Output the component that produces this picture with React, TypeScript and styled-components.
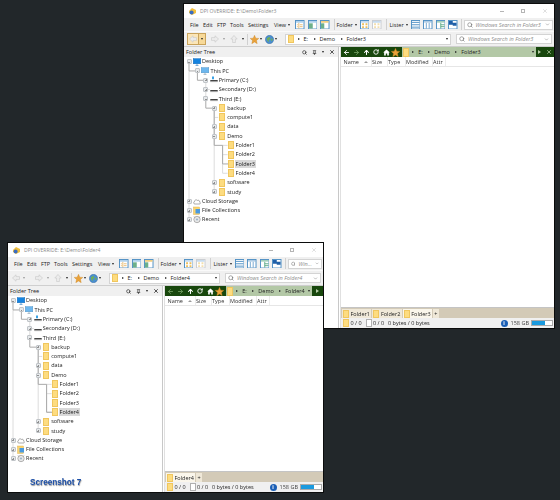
import React from "react";
import styled, { createGlobalStyle } from "styled-components";
import { ArrowLeft, ArrowRight, ArrowUp, RotateCw, Search, X, ChevronDown, Pin } from "lucide-react";

const GlobalStyle = createGlobalStyle`
  html, body {
    margin: 0;
    padding: 0;
    height: 100%;
    background: #22272a;
    overflow: hidden;
  }
  * { box-sizing: border-box; }
`;

const ROW_H = 9.3;

const Desktop = styled.div`
  position: relative;
  width: 560px;
  height: 500px;
  background: #22272a;
  font-family: "Open Sans", "Noto Sans", sans-serif;
  font-size: 5.5px;
  color: #222;
`;

const Win = styled.div<{ $x: number; $y: number; $w: number; $h: number }>`
  position: absolute;
  left: ${(p) => p.$x}px;
  top: ${(p) => p.$y}px;
  width: ${(p) => p.$w}px;
  height: ${(p) => p.$h}px;
  background: #fff;
  outline: 1px solid #0b0c0c;
  display: flex;
  flex-direction: column;
  filter: blur(0.3px);
`;

const TitleBar = styled.div`
  height: 14px;
  flex: none;
  display: flex;
  align-items: center;
  padding-left: 4px;
  gap: 3px;
  color: #8a8a8a;
  background: #fff;
`;

const TitleText = styled.span`
  font-size: 5.1px;
`;

const Controls = styled.div`
  margin-left: auto;
  display: flex;
  align-items: center;
  gap: 17px;
  padding-right: 6px;
  color: #aaa;
`;

const MinLine = styled.span`
  width: 4px;
  height: 1px;
  background: #b5b5b5;
`;

const MaxBox = styled.span`
  width: 4px;
  height: 4px;
  border: 1px solid #b5b5b5;
`;

const MenuRow = styled.div`
  height: 14px;
  flex: none;
  display: flex;
  align-items: center;
  padding-left: 6px;
  padding-right: 1px;
  background: #f0f0f0;
  border-bottom: 1px solid #fafafa;
`;

const NavRow = styled.div`
  height: 15px;
  flex: none;
  display: flex;
  align-items: center;
  padding-left: 3px;
  padding-right: 2px;
  background: #f0f0f0;
  border-bottom: 1px solid #cfcfcf;
`;

const MenuItem = styled.span<{ $w: number }>`
  width: ${(p) => p.$w}px;
  flex: none;
  color: #222;
  white-space: nowrap;
  display: flex;
  align-items: center;
`;

const Caret = styled.span<{ $light?: boolean; $ml?: number }>`
  display: inline-block;
  flex: none;
  margin-left: ${(p) => p.$ml ?? 2}px;
  width: 0;
  height: 0;
  border-left: 1.8px solid transparent;
  border-right: 1.8px solid transparent;
  border-top: 2.2px solid ${(p) => (p.$light ? "#999" : "#222")};
`;

const Sep = styled.span<{ $ml: number; $mr: number }>`
  flex: none;
  width: 1px;
  height: 11px;
  background: #d0d0d0;
  margin-left: ${(p) => p.$ml}px;
  margin-right: ${(p) => p.$mr}px;
`;

const ToolIcon = styled.span<{ $ml?: number }>`
  flex: none;
  display: flex;
  margin-left: ${(p) => p.$ml ?? 0}px;
`;

const SearchBox = styled.div<{ $w?: number; $ml?: number }>`
  flex: ${(p) => (p.$w ? "none" : 1)};
  width: ${(p) => (p.$w ? `${p.$w}px` : "auto")};
  margin-left: ${(p) => p.$ml ?? 0}px;
  min-width: 0;
  height: 10px;
  background: #fff;
  border: 1px solid #d4d4d4;
  display: flex;
  align-items: center;
  padding: 0 2px;
  gap: 3px;
  color: #8c8c8c;
  font-style: italic;
  white-space: nowrap;
`;

const Fill = styled.span`
  flex: 1;
`;

const BackSplit = styled.div`
  flex: none;
  width: 19px;
  height: 12px;
  display: flex;
  border: 1px solid #c9a35b;
  background: #fbe6b8;
`;

const BackPart = styled.span`
  flex: 1;
  display: flex;
  align-items: center;
  justify-content: center;
  color: #fff;
`;

const CaretPart = styled.span`
  width: 7px;
  display: flex;
  align-items: center;
  justify-content: center;
  border-left: 1px solid #c9a35b;
  background: #f7d998;
`;

const AddressBox = styled.div<{ $ml: number }>`
  flex: 1;
  min-width: 0;
  margin-left: ${(p) => p.$ml}px;
  height: 11px;
  background: #fff;
  border: 1px solid #d4d4d4;
  display: flex;
  align-items: center;
  padding: 0 2px;
  color: #222;
  white-space: nowrap;
`;

const Folder = styled.span<{ $w?: number; $h?: number }>`
  display: inline-block;
  flex: none;
  width: ${(p) => p.$w ?? 6}px;
  height: ${(p) => p.$h ?? 8}px;
  background: #fddc80;
  border: 0.5px solid #f0c65e;
`;

const Crumb = styled.span`
  display: inline-flex;
  align-items: center;
  margin-left: 5.5px;
  ${Folder} + & {
    margin-left: 3.5px;
  }
  &::before {
    content: "";
    width: 0;
    height: 0;
    margin-right: 4px;
    border-top: 1.6px solid transparent;
    border-bottom: 1.6px solid transparent;
    border-left: 2.2px solid #222;
  }
`;

const Panes = styled.div`
  flex: 1;
  min-height: 0;
  display: flex;
`;

const TreePane = styled.div`
  width: 155px;
  flex: none;
  display: flex;
  flex-direction: column;
  border-right: 1px solid #c8c8c8;
`;

const PaneHead = styled.div`
  height: 10px;
  flex: none;
  display: flex;
  align-items: center;
  padding: 0 3px 0 2px;
  background: #f0f0f0;
  color: #222;
`;

const HeadIcons = styled.div`
  margin-left: auto;
  display: flex;
  align-items: center;
  gap: 5px;
  color: #222;
`;

const TreeBody = styled.div`
  position: relative;
  flex: 1;
  min-height: 0;
`;

const TreeLines = styled.svg`
  position: absolute;
  left: 0;
  top: 0;
`;

const TreeRow = styled.div<{ $depth: number }>`
  position: relative;
  height: ${ROW_H}px;
  display: flex;
  align-items: center;
  padding-left: ${(p) => 2.5 + p.$depth * 8.4}px;
`;

const Expander = styled.span<{ $state?: "plus" | "minus" }>`
  flex: none;
  position: relative;
  width: 5px;
  height: 5px;
  background: ${(p) => (p.$state ? "#e6e9eb" : "transparent")};
  border: ${(p) => (p.$state ? "0.5px solid #c0c4c8" : "none")};
  border-radius: 1px;
  margin-right: 1.5px;
  &::after {
    content: ${(p) => (p.$state ? '""' : "none")};
    position: absolute;
    left: 0.7px;
    right: 0.7px;
    top: 1.7px;
    height: 0.7px;
    background: #8f8f8f;
  }
  &::before {
    content: ${(p) => (p.$state === "plus" ? '""' : "none")};
    position: absolute;
    top: 0.7px;
    bottom: 0.7px;
    left: 1.7px;
    width: 0.7px;
    background: #8f8f8f;
  }
`;

const IconSlot = styled.span`
  flex: none;
  width: 8px;
  height: 9px;
  display: flex;
  align-items: center;
  justify-content: center;
`;

const Label = styled.span<{ $sel?: boolean }>`
  margin-left: ${(p) => (p.$sel ? 0 : 1)}px;
  padding: 0 ${(p) => (p.$sel ? 1 : 0)}px;
  white-space: nowrap;
  color: #222;
  background: ${(p) => (p.$sel ? "#d9d9d9" : "transparent")};
  line-height: 8.5px;
`;

const ListPane = styled.div`
  flex: 1;
  min-width: 0;
  display: flex;
  flex-direction: column;
  margin-left: 1px;
  border-left: 1px solid #e0e0e0;
`;

const GreenBar = styled.div`
  height: 10px;
  flex: none;
  display: flex;
  align-items: center;
  background: #18470d;
  padding-left: 1px;
`;

const GreenBtn = styled.span<{ $dim?: boolean }>`
  flex: none;
  width: 9.8px;
  display: flex;
  justify-content: center;
  color: ${(p) => (p.$dim ? "#6f9a5e" : "#fff")};
`;

const GreenAddress = styled.div`
  flex: 1;
  min-width: 0;
  margin-left: 1px;
  height: 10px;
  background: #b3c8a6;
  display: flex;
  align-items: center;
  padding: 0 2px 0 1px;
  color: #222;
  white-space: nowrap;
`;

const EndBtns = styled.div<{ $w: number }>`
  flex: none;
  width: ${(p) => p.$w}px;
  display: flex;
  align-items: center;
  justify-content: space-around;
  color: #b5cca6;
`;

const PlayMark = styled.span`
  width: 0;
  height: 0;
  border-top: 2px solid transparent;
  border-bottom: 2px solid transparent;
  border-left: 3px solid #b5cca6;
`;

const ColRow = styled.div`
  height: 10px;
  flex: none;
  display: flex;
  align-items: center;
  padding-left: 2.5px;
  color: #333;
  border-bottom: 1px solid #e6e6e6;
`;

const Col = styled.span<{ $w: number }>`
  width: ${(p) => p.$w}px;
  flex: none;
  height: 100%;
  display: flex;
  align-items: center;
  white-space: nowrap;
  border-right: 1px solid #ececec;
`;

const SortMark = styled.span`
  margin-left: 5px;
  width: 0;
  height: 0;
  border-left: 2px solid transparent;
  border-right: 2px solid transparent;
  border-bottom: 2px solid #999;
`;

const ListBody = styled.div`
  flex: 1;
  background: #fff;
`;

const TabBar = styled.div`
  height: 11px;
  flex: none;
  display: flex;
  align-items: stretch;
  background: #d3cab7;
  padding: 1px 0 0 1px;
  border-top: 1px solid #c4c4c4;
`;

const Tab = styled.div<{ $active?: boolean }>`
  flex: none;
  display: flex;
  align-items: center;
  gap: 1.5px;
  padding: 0 1.5px 0 1px;
  margin-right: 1px;
  color: #222;
  background: ${(p) => (p.$active ? "#faf6eb" : "#efe8d8")};
`;

const StatusBar = styled.div`
  height: 10px;
  flex: none;
  display: flex;
  align-items: center;
  padding: 0 1px 0 2px;
  background: #f0f0f0;
  color: #222;
  white-space: nowrap;
`;

const StatusText = styled.span<{ $w: number }>`
  width: ${(p) => p.$w}px;
  flex: none;
  margin-left: 1.5px;
`;

const DocIcon = styled.span`
  width: 6px;
  height: 8px;
  flex: none;
  background: #fff;
  border: 0.5px solid #b0b0b0;
`;

const Info = styled.span`
  margin-left: auto;
  width: 7px;
  height: 7px;
  border-radius: 50%;
  background: #1b5fb5;
  color: #fff;
  font-size: 5px;
  font-weight: 700;
  line-height: 7px;
  text-align: center;
  flex: none;
`;

const FreeText = styled.span`
  margin: 0 2px 0 3px;
  flex: none;
  color: #444;
`;

const DiskBar = styled.span`
  width: 22px;
  height: 6px;
  flex: none;
  background: #fff;
  border: 0.5px solid #aaa;
  display: flex;
`;

const DiskUsed = styled.span`
  height: 100%;
  background: #1b9ade;
`;

const Caption = styled.div`
  position: absolute;
  left: 30px;
  top: 478px;
  font-family: "Liberation Sans", Arial, sans-serif;
  font-size: 8.2px;
  font-weight: 700;
  color: #1c4fa8;
  text-shadow: 0.5px 0.5px 1px #8a8a8a;
  filter: blur(0.25px);
`;

// small drawings
const AppIcon = () => (
  <svg width="9" height="9" viewBox="0 0 9 9">
    <path d="M1 4 L4 1 L8 3 L8 6 L4 8 L1 6Z" fill="#f2bf3c" />
    <circle cx="3.6" cy="5.6" r="2" fill="#3a6cc0" />
  </svg>
);

const Panel = ({ kind, dim }: { kind: number; dim?: boolean }) => {
  const c = dim ? "#c9ccd0" : "#4f8fc4";
  return (
    <svg width="9.5" height="9.5" viewBox="0 0 10 10">
      <rect x="0.5" y="0.5" width="9" height="9" fill="#fff" stroke={c} />
      {kind === 0 && <path d="M1 2h8" stroke="#9ec7e8" strokeWidth="1.5" />}
      {kind === 0 && <path d="M4 3v6M2 5h1M2 7h1M5 5h3M5 7h3" stroke="#e0a23c" strokeWidth="0.7" />}
      {kind === 1 && <path d="M1 2h8" stroke="#9ec7e8" strokeWidth="1.5" />}
      {kind === 1 && <rect x="1" y="3.5" width="4" height="5.5" fill="#6db08a" />}
      {kind === 2 && <path d="M1 2h8" stroke="#eec262" strokeWidth="1.5" />}
      {kind === 2 && <rect x="1" y="3.5" width="3.5" height="5.5" fill="#6db08a" />}
      {kind === 3 && <path d="M1 2h8" stroke="#b9d3ea" strokeWidth="1.5" />}
      {kind === 3 && <path d="M2.2 3.5h2v2h-2zM5.8 3.5h2v2h-2zM2.2 6.5h2v2h-2zM5.8 6.5h2v2h-2z" fill={dim ? "#f3dfae" : "#eebf5b"} />}
      {kind === 4 && <path d="M1 2.5h8M1 5h8M1 7.5h8" stroke={c} strokeWidth="1" />}
      {kind === 5 && <path d="M1 2h8M3.5 3v6M6.5 3v6" stroke={c} strokeWidth="0.8" />}
      {kind === 6 && <path d="M1 2h8M5 3v6M5 5h4M5 7h4" stroke="#4fa27c" strokeWidth="0.9" />}
      {kind === 7 && <path d="M5 3h4v3H5zM1 1h4v4H1z" fill="#1f5fa8" />}
    </svg>
  );
};

const DimArrow = ({ d }: { d: string }) => (
  <svg width="8" height="8" viewBox="0 0 8 8">
    <path d={d} fill="#ececec" stroke="#c8c8c8" strokeWidth="0.6" />
  </svg>
);

const LEFT = "M0.5 4L4 0.8V2.6H7.5V5.4H4V7.2Z";
const RIGHT = "M7.5 4L4 0.8V2.6H0.5V5.4H4V7.2Z";
const UP = "M4 0.5L7.2 4H5.4V7.5H2.6V4H0.8Z";

const StarIcon = ({ size = 9 }: { size?: number }) => (
  <svg width={size} height={size} viewBox="0 0 10 10">
    <path d="M5 0.3L6.4 3.5L9.8 3.8L7.2 6.1L8 9.6L5 7.8L2 9.6L2.8 6.1L0.2 3.8L3.6 3.5Z" fill="#e9a23b" stroke="#c98320" strokeWidth="0.4" />
  </svg>
);

const GlobeIcon = () => (
  <svg width="9" height="9" viewBox="0 0 10 10">
    <circle cx="5" cy="5" r="4.6" fill="#4b8fd0" stroke="#33689c" strokeWidth="0.5" />
    <path d="M2 3.5L5 2L6 4L4 6L4.5 8L2.5 6.5ZM7 3.5L8.7 5L7.5 7L6.5 5.5Z" fill="#6fae5b" />
  </svg>
);

const HomeIcon = () => (
  <svg width="7" height="7" viewBox="0 0 8 8">
    <path d="M4 0.5L7.8 4H6.7V7.5H4.8V5.2H3.2V7.5H1.3V4H0.2Z" fill="#fff" />
  </svg>
);

const Monitor = ({ light }: { light?: boolean }) => (
  <svg width="8" height="8" viewBox="0 0 8 8">
    <rect x="0.2" y="0.6" width="7.6" height="5.2" fill={light ? "#6db7ee" : "#1483e0"} stroke={light ? "#4a8fc4" : "#0f66b5"} strokeWidth="0.4" />
    <path d="M2.5 7.4h3M4 5.8v1.6" stroke={light ? "#8fa3b3" : "#3f86c6"} strokeWidth="0.7" />
  </svg>
);

const Drive = ({ flag }: { flag?: boolean }) => (
  <svg width="8" height="8" viewBox="0 0 8 8">
    {flag && <path d="M2 0.6h2v2.6H2z" fill="#3ca3e6" />}
    <rect x="0.3" y="4" width="7.4" height="1.5" fill="#444" />
    <rect x="0.3" y="5.5" width="7.4" height="0.6" fill="#aaa" />
  </svg>
);

const CloudIcon = () => (
  <svg width="8" height="7" viewBox="0 0 8 7">
    <path d="M1.8 6C0.6 6 0.3 4.4 1.3 3.8C1.3 2.2 3.3 1.2 4.4 2.4C5.8 1.8 7 3 6.6 4.1C7.8 4.5 7.5 6 6.4 6Z" fill="#fff" stroke="#555" strokeWidth="0.5" />
  </svg>
);

const CollectionIcon = () => (
  <svg width="8" height="9" viewBox="0 0 8 9">
    <rect x="0.5" y="1" width="6" height="7.5" fill="#fbd46f" stroke="#d9a93d" strokeWidth="0.4" />
    <rect x="2.5" y="3" width="4.5" height="4.5" fill="#4a9ae0" />
  </svg>
);

const RecentIcon = () => (
  <svg width="8" height="9" viewBox="0 0 8 9">
    <circle cx="4" cy="4.5" r="3.2" fill="#e8e8e8" stroke="#888" strokeWidth="0.6" />
    <circle cx="4" cy="4.5" r="1.1" fill="#9fb6c9" />
    <path d="M1 1.5l1 1M7 1.5l-1 1" stroke="#888" strokeWidth="0.6" />
  </svg>
);

type Row = {
  label: string;
  depth: number;
  state?: "plus" | "minus";
  icon: React.ReactNode;
};

const rows: Row[] = [
  { label: "Desktop", depth: 0, state: "minus", icon: <Monitor /> },
  { label: "This PC", depth: 1, state: "minus", icon: <Monitor light /> },
  { label: "Primary (C:)", depth: 2, state: "plus", icon: <Drive flag /> },
  { label: "Secondary (D:)", depth: 2, state: "plus", icon: <Drive /> },
  { label: "Third (E:)", depth: 2, state: "minus", icon: <Drive /> },
  { label: "backup", depth: 3, state: "plus", icon: <Folder /> },
  { label: "compute1", depth: 3, icon: <Folder /> },
  { label: "data", depth: 3, state: "plus", icon: <Folder /> },
  { label: "Demo", depth: 3, state: "minus", icon: <Folder /> },
  { label: "Folder1", depth: 4, icon: <Folder /> },
  { label: "Folder2", depth: 4, icon: <Folder /> },
  { label: "Folder3", depth: 4, icon: <Folder /> },
  { label: "Folder4", depth: 4, icon: <Folder /> },
  { label: "software", depth: 3, state: "plus", icon: <Folder /> },
  { label: "study", depth: 3, state: "plus", icon: <Folder /> },
  { label: "Cloud Storage", depth: 0, state: "plus", icon: <CloudIcon /> },
  { label: "File Collections", depth: 0, state: "plus", icon: <CollectionIcon /> },
  { label: "Recent", depth: 0, state: "plus", icon: <RecentIcon /> },
];

const yOf = (i: number) => ROW_H * i + ROW_H / 2;
const xOf = (d: number) => 5 + d * 8.4;

function Lines({ selected }: { selected: number }) {
  const faint = "#dcdcdc";
  const strong = "#a9a9a9";
  return (
    <TreeLines width="150" height="180" fill="none">
      <path d={`M${xOf(0)} ${yOf(1)}V${yOf(17)}`} stroke={faint} />
      <path d={`M${xOf(2)} ${yOf(2)}V${yOf(4)}M${xOf(2)} ${yOf(3)}H${xOf(2) + 4}`} stroke={faint} />
      <path d={`M${xOf(3)} ${yOf(5)}V${yOf(14)}M${xOf(3)} ${yOf(6)}H${xOf(3) + 4}`} stroke={faint} />
      <path d={`M${xOf(4)} ${yOf(9)}V${yOf(12)}M${xOf(4)} ${yOf(9)}H${xOf(4) + 5}M${xOf(4)} ${yOf(10)}H${xOf(4) + 5}M${xOf(4)} ${yOf(12)}H${xOf(4) + 5}`} stroke={faint} />
      <path
        d={`M${xOf(0)} ${yOf(0)}V${yOf(1)}H${xOf(1)}V${yOf(2)}H${xOf(2)}M${xOf(2)} ${yOf(4)}V${yOf(5)}H${xOf(3)}V${yOf(9)}H${xOf(4)}V${yOf(selected)}H${xOf(4) + 6}`}
        stroke={strong}
      />
    </TreeLines>
  );
}

type WindowProps = {
  x: number;
  y: number;
  w: number;
  h: number;
  folder: string;
  tabs: string[];
  menuSearch: string;
  endWidth: number;
  showClose?: boolean;
  backActive?: boolean;
};

function ExplorerWindow({ x, y, w, h, folder, tabs, menuSearch, endWidth, showClose, backActive }: WindowProps) {
  const selected = rows.findIndex((r) => r.label === folder);
  return (
    <Win $x={x} $y={y} $w={w} $h={h}>
      <TitleBar>
        <AppIcon />
        <TitleText>DPI OVERRIDE: E:\Demo\{folder}</TitleText>
        <Controls>
          <MinLine />
          <MaxBox />
          <X size={6} strokeWidth={1.5} />
        </Controls>
      </TitleBar>

      <MenuRow>
        <MenuItem $w={13}>File</MenuItem>
        <MenuItem $w={14}>Edit</MenuItem>
        <MenuItem $w={13}>FTP</MenuItem>
        <MenuItem $w={18}>Tools</MenuItem>
        <MenuItem $w={26}>Settings</MenuItem>
        <MenuItem $w={21}>View<Caret /></MenuItem>
        <ToolIcon><Panel kind={0} /></ToolIcon>
        <ToolIcon $ml={3}><Panel kind={1} /></ToolIcon>
        <ToolIcon $ml={3}><Panel kind={2} /></ToolIcon>
        <Sep $ml={4} $mr={2} />
        <MenuItem $w={23}>Folder<Caret /></MenuItem>
        <ToolIcon><Panel kind={3} /></ToolIcon>
        <ToolIcon $ml={3}><Panel kind={3} dim /></ToolIcon>
        <Sep $ml={4} $mr={3} />
        <MenuItem $w={21}>Lister<Caret /></MenuItem>
        <ToolIcon><Panel kind={4} /></ToolIcon>
        <ToolIcon $ml={3}><Panel kind={5} /></ToolIcon>
        <ToolIcon $ml={3}><Panel kind={6} /></ToolIcon>
        <ToolIcon $ml={3}><Panel kind={7} /></ToolIcon>
        <Sep $ml={3} $mr={2} />
        <SearchBox>
          <Search size={6} color="#555" strokeWidth={2} />
          <Fill>{menuSearch}</Fill>
          <ChevronDown size={5} color="#666" />
        </SearchBox>
      </MenuRow>

      <NavRow>
        {backActive ? (
          <BackSplit>
            <BackPart><DimArrow d={LEFT} /></BackPart>
            <CaretPart><Caret $ml={0} /></CaretPart>
          </BackSplit>
        ) : (
          <MenuItem $w={19}>
            <ToolIcon $ml={1}><DimArrow d={LEFT} /></ToolIcon>
            <Caret $light $ml={3} />
          </MenuItem>
        )}
        <ToolIcon $ml={5}><DimArrow d={RIGHT} /></ToolIcon>
        <Caret $light $ml={4} />
        <ToolIcon $ml={5}><DimArrow d={UP} /></ToolIcon>
        <Caret $ml={4} />
        <Sep $ml={3} $mr={2} />
        <StarIcon />
        <Caret $ml={1} />
        <ToolIcon $ml={3}><GlobeIcon /></ToolIcon>
        <Caret $ml={1} />
        <AddressBox $ml={8}>
          <Folder $h={8} />
          <Crumb>E:</Crumb>
          <Crumb>Demo</Crumb>
          <Crumb>{folder}</Crumb>
          <Fill />
          <Caret $ml={0} />
        </AddressBox>
        <SearchBox $w={96} $ml={5}>
          <Search size={6} color="#555" strokeWidth={2} />
          <Fill>Windows Search in {folder}</Fill>
          <ChevronDown size={5} color="#666" />
        </SearchBox>
      </NavRow>

      <Panes>
        <TreePane>
          <PaneHead>
            Folder Tree
            <HeadIcons>
              <Search size={5} strokeWidth={3} />
              <Pin size={5} strokeWidth={3} />
              <Caret $ml={0} />
              <X size={6} strokeWidth={3} />
            </HeadIcons>
          </PaneHead>
          <TreeBody>
            <Lines selected={selected} />
            {rows.map((r, i) => (
              <TreeRow key={r.label} $depth={r.depth}>
                <Expander $state={r.state} />
                <IconSlot>{r.icon}</IconSlot>
                <Label $sel={i === selected}>{r.label}</Label>
              </TreeRow>
            ))}
          </TreeBody>
        </TreePane>

        <ListPane>
          <GreenBar>
            <GreenBtn $dim={!backActive}><ArrowLeft size={7} strokeWidth={3} /></GreenBtn>
            <GreenBtn $dim><ArrowRight size={7} strokeWidth={3} /></GreenBtn>
            <GreenBtn><ArrowUp size={7} strokeWidth={3.5} /></GreenBtn>
            <GreenBtn><RotateCw size={6} strokeWidth={3.5} /></GreenBtn>
            <GreenBtn><HomeIcon /></GreenBtn>
            <GreenBtn><StarIcon /></GreenBtn>
            <GreenAddress>
              <Folder $h={9} />
              <Crumb>E:</Crumb>
              <Crumb>Demo</Crumb>
              <Crumb>{folder}</Crumb>
              <Fill />
              <Caret $ml={0} />
            </GreenAddress>
            <EndBtns $w={endWidth}>
              <PlayMark />
              {showClose && <X size={6} strokeWidth={3} />}
            </EndBtns>
          </GreenBar>
          <ColRow>
            <Col $w={28.5}>Name<SortMark /></Col>
            <Col $w={16}>Size</Col>
            <Col $w={18}>Type</Col>
            <Col $w={27}>Modified</Col>
            <Col $w={13}>Attr</Col>
          </ColRow>
          <ListBody />
          <TabBar>
            {tabs.map((t) => (
              <Tab key={t} $active={t === folder}>
                <Folder $h={8} />
                {t}
              </Tab>
            ))}
            <Tab>+</Tab>
          </TabBar>
          <StatusBar>
            <Folder $h={8} />
            <StatusText $w={15}>0 / 0</StatusText>
            <DocIcon />
            <StatusText $w={15}>0 / 0</StatusText>
            <span>0 bytes / 0 bytes</span>
            <Info>i</Info>
            <FreeText>158 GB</FreeText>
            <DiskBar>
              <DiskUsed style={{ width: `${(158 / 245) * 100}%` }} />
            </DiskBar>
          </StatusBar>
        </ListPane>
      </Panes>
    </Win>
  );
}

export default function App() {
  return (
    <Desktop>
      <GlobalStyle />
      <ExplorerWindow
        x={184}
        y={4}
        w={370}
        h={324}
        folder="Folder3"
        tabs={["Folder1", "Folder2", "Folder3"]}
        menuSearch="Windows Search in Folder3"
        endWidth={18}
        showClose
        backActive
      />
      <ExplorerWindow
        x={8}
        y={243}
        w={315}
        h={249}
        folder="Folder4"
        tabs={["Folder4"]}
        menuSearch="Win..."
        endWidth={11}
      />
      <Caption>Screenshot 7</Caption>
    </Desktop>
  );
}
